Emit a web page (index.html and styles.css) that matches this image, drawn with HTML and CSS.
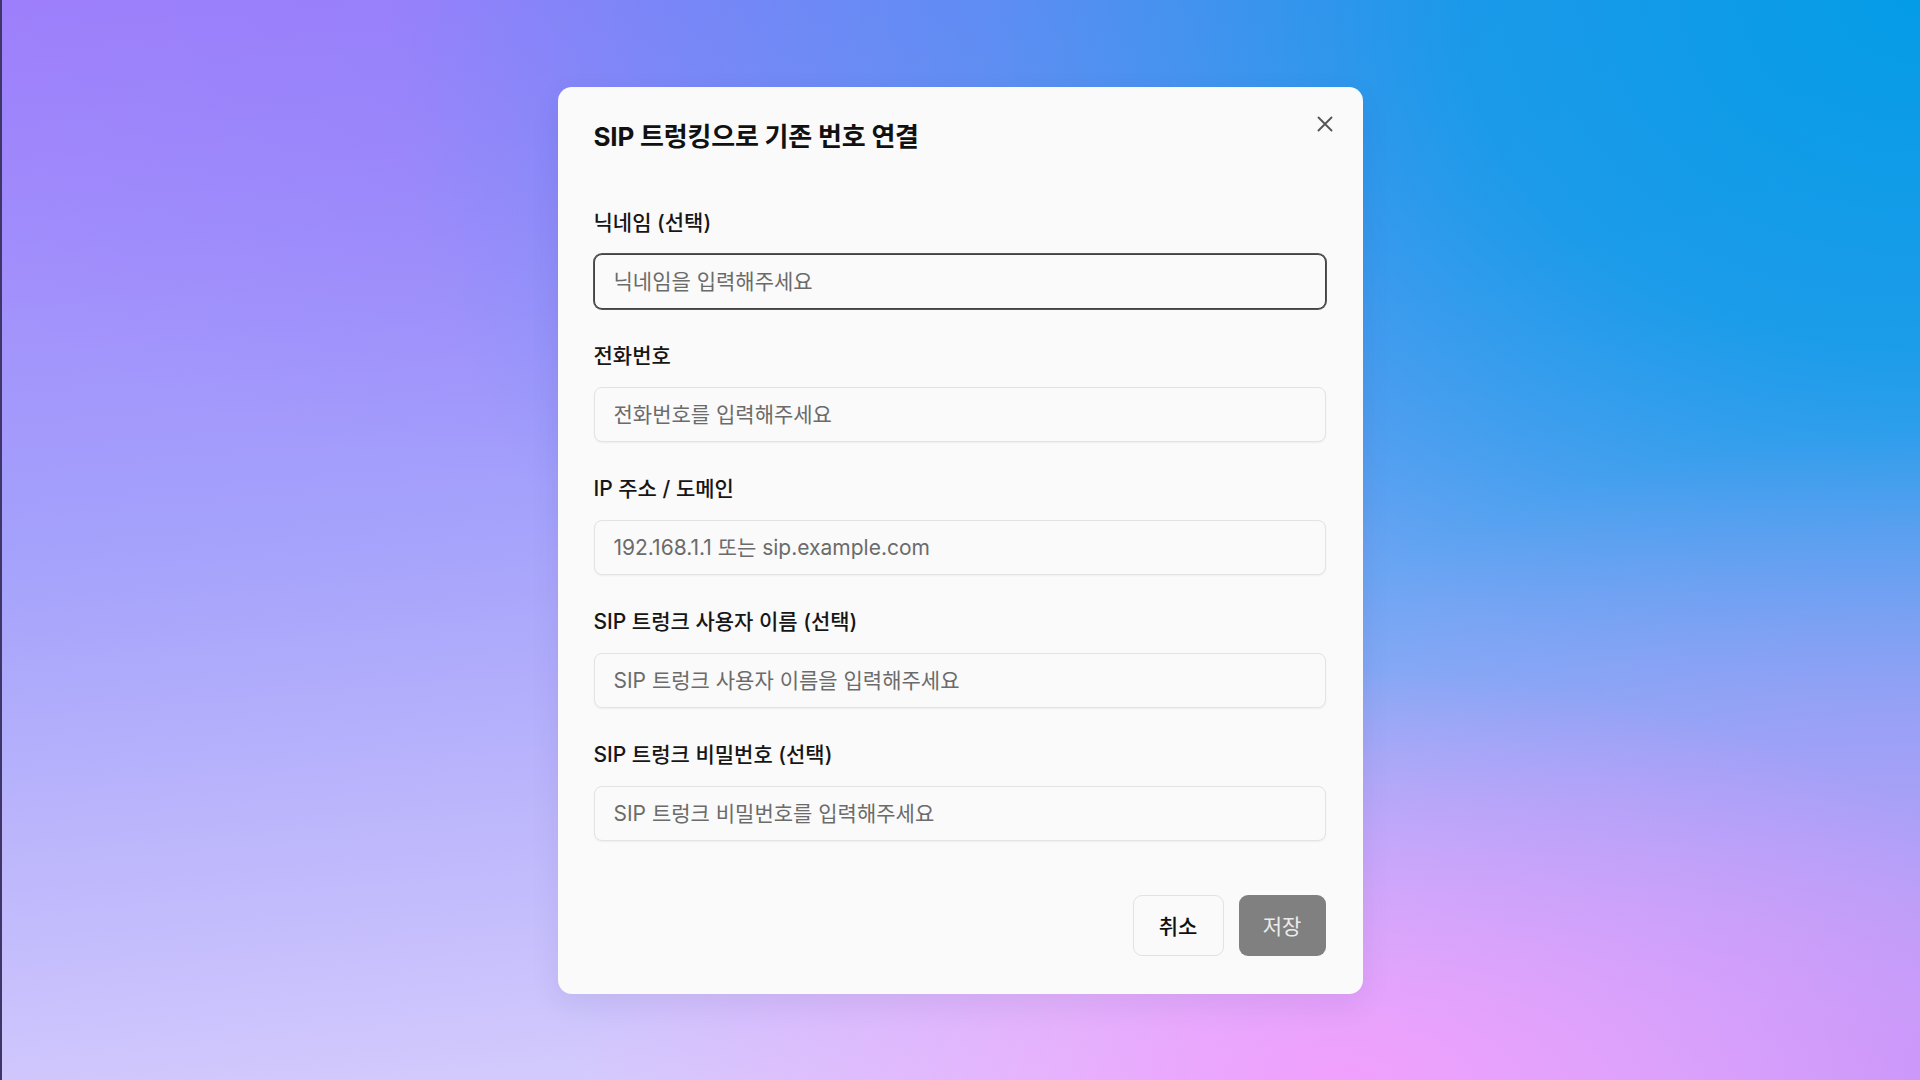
FILE: index.html
```html
<!DOCTYPE html>
<html lang="ko">
<head>
<meta charset="utf-8">
<title>SIP 트렁킹으로 기존 번호 연결</title>
<link rel="stylesheet" href="styles.css">
</head>
<body>
<div class="page">
  <div class="modal" role="dialog" aria-labelledby="dlg-title">
    <button class="close-btn" type="button" aria-label="닫기">
      <svg width="16" height="16" viewBox="0 0 16 16" fill="none" stroke="currentColor" stroke-width="1.9" stroke-linecap="round">
        <path d="M1.5 1.5 L14.5 14.5 M14.5 1.5 L1.5 14.5"/>
      </svg>
    </button>
    <h2 class="modal-title" id="dlg-title">SIP 트렁킹으로 기존 번호 연결</h2>
    <form class="form">
      <div class="field">
        <label class="field-label" for="f-nick">닉네임 (선택)</label>
        <input class="field-input is-focused" id="f-nick" type="text" placeholder="닉네임을 입력해주세요" autofocus>
      </div>
      <div class="field">
        <label class="field-label" for="f-phone">전화번호</label>
        <input class="field-input" id="f-phone" type="text" placeholder="전화번호를 입력해주세요">
      </div>
      <div class="field">
        <label class="field-label" for="f-host">IP 주소 / 도메인</label>
        <input class="field-input" id="f-host" type="text" placeholder="192.168.1.1 또는 sip.example.com">
      </div>
      <div class="field">
        <label class="field-label" for="f-user">SIP 트렁크 사용자 이름 (선택)</label>
        <input class="field-input" id="f-user" type="text" placeholder="SIP 트렁크 사용자 이름을 입력해주세요">
      </div>
      <div class="field">
        <label class="field-label" for="f-pass">SIP 트렁크 비밀번호 (선택)</label>
        <input class="field-input" id="f-pass" type="password" placeholder="SIP 트렁크 비밀번호를 입력해주세요">
      </div>
    </form>
    <div class="actions">
      <button class="btn btn-outline" type="button">취소</button>
      <button class="btn btn-disabled" type="button">저장</button>
    </div>
  </div>
</div>
</body>
</html>
```
FILE: styles.css
```css
* { box-sizing: border-box; }

html, body {
  margin: 0;
  padding: 0;
  height: 100%;
}

body {
  font-family: Inter, "Noto Sans CJK KR", "Noto Sans", sans-serif;
  color: #111111;
}

.page {
  min-height: 100vh;
  display: flex;
  align-items: center;
  justify-content: center;
  box-shadow: inset 2px 0 0 #3e3668;
  background:
    radial-gradient(ellipse 40% 38% at 70% 100%, rgba(242,158,253,0.95) 0%, rgba(242,158,253,0.5) 45%, rgba(242,158,253,0) 100%),
    radial-gradient(ellipse 45% 60% at 100% 100%, rgba(192,146,248,0.95) 0%, rgba(186,148,248,0.5) 55%, rgba(186,148,248,0) 100%),
    radial-gradient(ellipse 80% 108% at 100% 0%, rgba(4,156,230,1) 0%, rgba(4,156,230,0.85) 30%, rgba(4,156,230,0.4) 60%, rgba(4,156,230,0) 100%),
    radial-gradient(ellipse 45% 45% at 35% 0%, rgba(140,128,250,0.6) 0%, rgba(140,128,250,0) 100%),
    linear-gradient(175deg, #a07efb 0%, #a4a2fb 45%, #c3bcfc 75%, #ddd3fc 100%);
}

.modal {
  position: relative;
  width: 805px;
  background: #fafafa;
  border-radius: 14px;
  padding: 34px 37px 38px 36px;
  box-shadow: 0 10px 30px rgba(40, 20, 90, 0.08);
}

.close-btn {
  position: absolute;
  top: 29px;
  right: 30px;
  width: 16px;
  height: 16px;
  padding: 0;
  border: 0;
  background: none;
  color: #555555;
  display: flex;
  cursor: pointer;
}

.modal-title {
  margin: 0;
  font-size: 26px;
  line-height: 32px;
  font-weight: 700;
  color: #111111;
  letter-spacing: -0.2px;
}

.form {
  margin-top: 58px;
  display: flex;
  flex-direction: column;
  gap: 35px;
}

.field {
  display: flex;
  flex-direction: column;
  gap: 19px;
}

.field-label {
  font-size: 21px;
  line-height: 24px;
  font-weight: 500;
  color: #161616;
}

.field-input {
  height: 55px;
  width: 100%;
  border: 1px solid #e3e3e3;
  border-radius: 8px;
  background: #fafafa;
  padding: 0 19px;
  font-family: inherit;
  font-size: 21px;
  color: #222222;
  outline: none;
  box-shadow: 0 1px 2px rgba(0, 0, 0, 0.05);
}

.field-input::placeholder {
  color: #6b6b6b;
  opacity: 1;
}

.field-input.is-focused,
.field-input:focus {
  border-color: #444444;
  box-shadow: 0 0 0 1px #555555;
  caret-color: #333333;
}

.actions {
  margin-top: 54px;
  display: flex;
  justify-content: flex-end;
  gap: 15px;
}

.btn {
  height: 61px;
  border-radius: 9px;
  font-family: inherit;
  font-size: 21px;
  cursor: pointer;
}

.btn-outline {
  width: 91px;
  padding: 0;
  background: #fafafa;
  border: 1px solid #e2e2e2;
  color: #111111;
  font-weight: 500;
}

.btn-disabled {
  width: 87px;
  padding: 0;
  background: #808080;
  border: 0;
  color: #ececec;
  font-weight: 400;
}
```
